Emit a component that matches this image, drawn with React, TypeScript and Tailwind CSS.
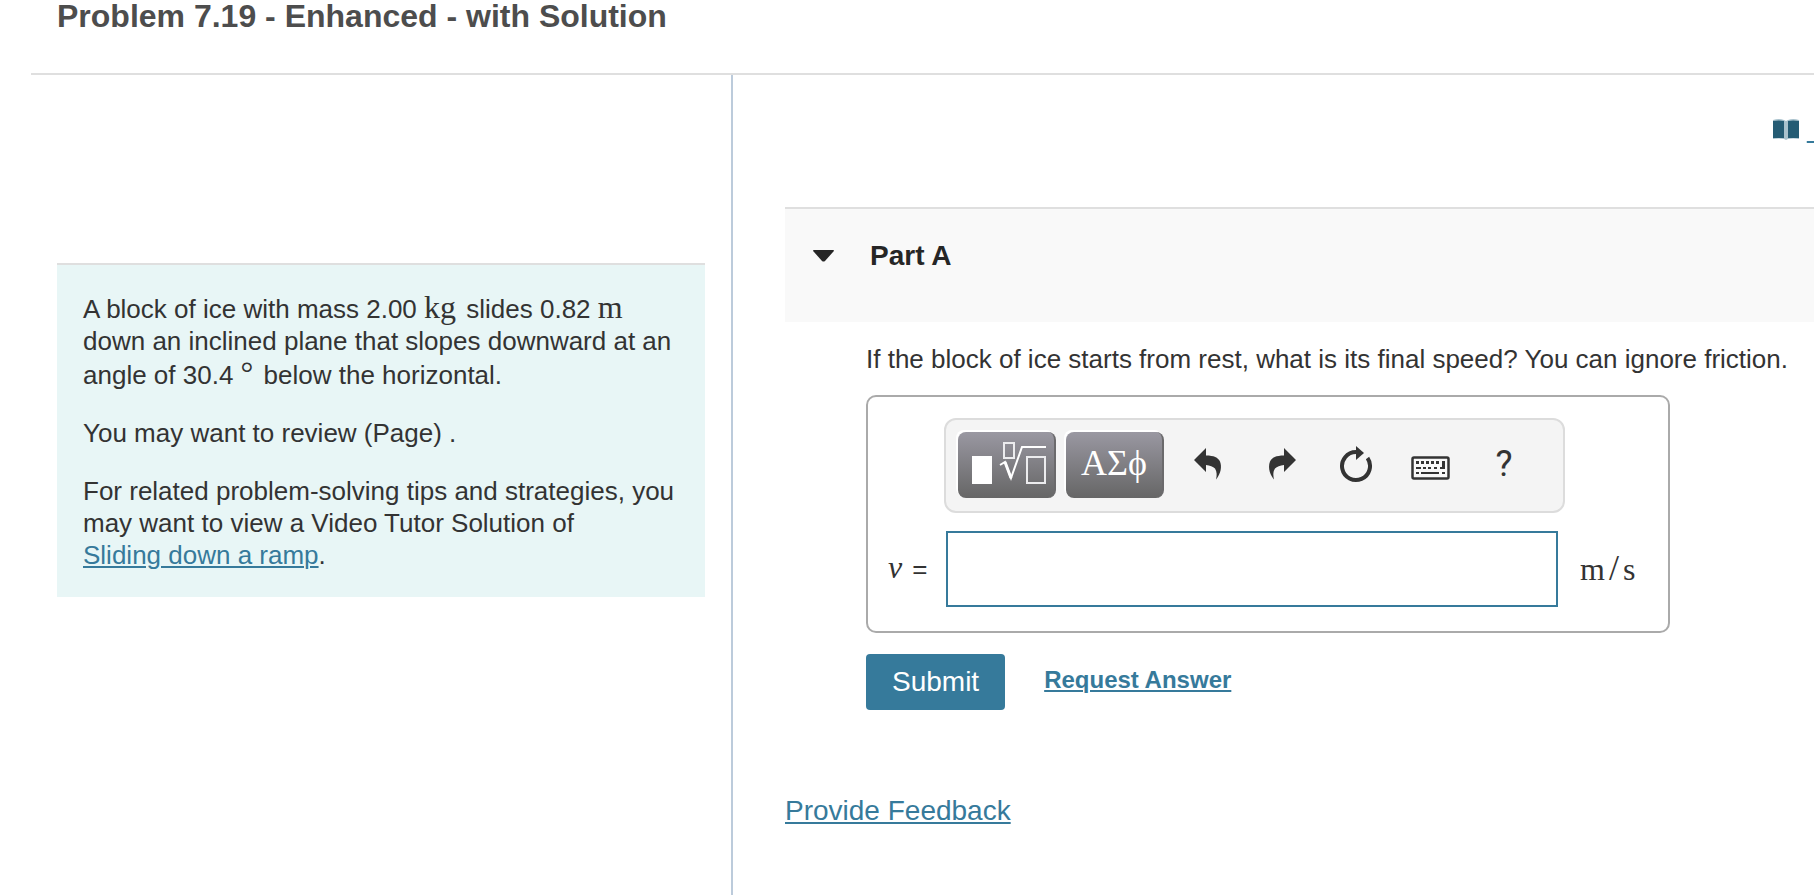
import { useState, type ReactNode } from "react"

const link = "text-[#367a9b] underline underline-offset-2 decoration-2"

function Unit({ children }: { children: ReactNode }) {
  return <span className="mr-[3px] font-['Liberation_Serif',serif] text-[32px] leading-8">{children}</span>
}

function TemplatesIcon() {
  return (
    <svg width="96" height="66" viewBox="0 0 96 66" fill="none" stroke="#fff" strokeWidth="2">
      <rect x="14" y="24" width="20" height="28" fill="#fff" stroke="none" />
      <rect x="46" y="11" width="10" height="15" stroke="#ececee" />
      <path d="M42 33l5-3 6 16 11-31h24" />
      <path d="M47 30l6 16" strokeWidth="3" />
      <rect x="69" y="25" width="18" height="26" stroke="#ececee" />
    </svg>
  )
}

function UndoIcon() {
  return (
    <svg width="28" height="32" viewBox="0 0 28 32" fill="#333">
      <path d="M0 12L12 0v7.500c8 0 12 2 14 6 2 5 1 12-4 18 1-4 1-8-1-11-2-2-5-3-9-3.500V24z" />
    </svg>
  )
}

function ResetIcon() {
  return (
    <svg width="34" height="38" viewBox="0 0 34 38">
      <path d="M17 7a14 14 0 1 0 11.500 6" fill="none" stroke="#333" strokeWidth="4" />
      <path d="M17 1l8 7-8 7z" fill="#333" />
    </svg>
  )
}

function KeyboardIcon() {
  return (
    <svg width="39" height="24" viewBox="0 0 39 24" fill="#333">
      <rect x="1.500" y="1.500" width="36" height="21" rx="1.500" fill="#f8f8f8" stroke="#333" strokeWidth="2.500" />
      <path d="M5 5h3v3H5zM10 5h3v3h-3zM15 5h3v3h-3zM20 5h3v3h-3zM25 5h3v3h-3zM31 5h3v8h-5v-2h2z" />
      <path d="M5 11h5v2H5zM12 11h3v2h-3zM17 11h3v2h-3zM23 11h3v2h-3zM5 16h3v2H5zM10 16h18v2H10zM31 16h3v2h-3z" />
    </svg>
  )
}

function BookIcon() {
  return (
    <svg width="26" height="22" viewBox="0 0 26 22">
      <path d="M0 1q6-2 11 0l2 1 2-1q5-2 11 0v19q-6-1-11 0l-2 1-2-1q-5-1-11 0z" fill="#a9c2cd" />
      <path d="M0 2q6-1 11 0v17H0zM15 2q5-1 11 0v17H15z" fill="#255c74" />
    </svg>
  )
}

const tools = [
  { label: "Undo", icon: <UndoIcon /> },
  { label: "Redo", icon: <span className="block -scale-x-100"><UndoIcon /></span> },
  { label: "Reset", icon: <ResetIcon /> },
  { label: "Keyboard shortcuts", icon: <span className="block pt-2"><KeyboardIcon /></span> },
  { label: "Help", icon: <span className="font-[Roboto,sans-serif] text-4xl">?</span> },
]

const dark =
  "h-[66px] w-[98px] rounded-lg border-r-2 border-[#6b6a6c] bg-linear-to-b from-[#9a98a2] to-[#666] text-white shadow-[-2px_-2px_0_#fff]"

function Toolbar() {
  return (
    <div className="ml-[76px] flex w-fit items-center rounded-xl border-2 border-[#dcdcdc] bg-[#f4f4f4] pt-3 pr-[22px] pb-[13px] pl-3">
      <button aria-label="Templates" className={`${dark} mr-2.5`}>
        <TemplatesIcon />
      </button>
      <button
        aria-label="Symbols"
        className={`${dark} mr-[7px] pb-1 font-['Liberation_Serif',serif] text-4xl leading-none`}
      >
        ΑΣϕ
      </button>
      {tools.map((tool) => (
        <button
          key={tool.label}
          aria-label={tool.label}
          className="flex h-[66px] w-[74px] items-center justify-center pb-0.5 text-[#333]"
        >
          {tool.icon}
        </button>
      ))}
    </div>
  )
}

function Answer() {
  const [value, setValue] = useState("")

  return (
    <form onSubmit={(e) => e.preventDefault()}>
      <div className="mt-5 max-w-[804px] rounded-[10px] border-2 border-[#aaa] pt-[21px] pb-6">
        <Toolbar />
        <div className="mt-[18px] flex items-center">
          <label htmlFor="answer" className="flex w-[78px] shrink-0 items-baseline gap-2.5 pb-0.5 pl-5 leading-8">
            <i className="font-['Liberation_Serif',serif] text-[32px]">v</i>
            <span>=</span>
          </label>
          <input
            id="answer"
            value={value}
            onChange={(e) => setValue(e.target.value)}
            className="h-[76px] min-w-0 flex-1 border-2 border-[#367a9b] bg-white px-3 outline-none"
          />
          <span className="flex w-[110px] shrink-0 items-baseline gap-1 pb-0.5 pl-[22px] font-['Liberation_Serif',serif] text-[32px] leading-8">
            <span>m</span>
            <span className="text-4xl leading-8">/</span>
            <span>s</span>
          </span>
        </div>
      </div>
      <div className="mt-[21px] flex items-center gap-[39px]">
        <button type="submit" className="h-14 rounded bg-[#367a9b] px-[26px] text-[28px] leading-8 text-white">
          Submit
        </button>
        <a href="#answer" className={`${link} pb-1 text-2xl font-bold`}>
          Request Answer
        </a>
      </div>
    </form>
  )
}

export default function App() {
  const [open, setOpen] = useState(true)

  return (
    <div className="flex min-h-screen flex-col overflow-x-hidden bg-white pl-[31px] font-['Liberation_Sans',Arial,sans-serif] text-[26px] leading-8 text-[#333]">
      <header className="border-b-2 border-[#dfdfdf] pb-[41px] pl-[26px]">
        <h1 className="text-[32px] leading-8 font-bold text-[#4d4d4d]">Problem 7.19 - Enhanced - with Solution</h1>
      </header>

      <div className="grid flex-1 grid-cols-[702fr_1081fr]">
        <aside className="min-w-0 border-r-2 border-[#bccbdb] px-[26px] pt-[188px]">
          <div className="space-y-[26px] border-t-2 border-[#dfdfdf] bg-[#e8f6f6] py-[26px] pr-6 pl-[26px]">
            <p>
              A block of ice with mass 2.00 <Unit>kg</Unit> slides 0.82 <Unit>m</Unit> down an inclined plane that
              slopes downward at an angle of 30.4 <Unit>°</Unit>&nbsp;below the horizontal.
            </p>
            <p>You may want to review (Page) .</p>
            <p>
              For related problem-solving tips and strategies, you may want to view a Video Tutor Solution of{" "}
              <a href="#ramp" className={`${link} whitespace-nowrap`}>
                Sliding down a ramp
              </a>
              .
            </p>
          </div>
        </aside>

        <main className="min-w-0 pt-[39px] pl-[52px]">
          <div className="flex h-8 items-center justify-end gap-2">
            <BookIcon />
            <a href="#review" aria-label="Review" className={link}>
              &nbsp;
            </a>
          </div>

          <section className="mt-[61px]">
            <h2 className="border-t-2 border-[#dfdfdf] bg-[#f9f9f9] pt-[31px] pb-[50px] pl-7 text-[28px] leading-8 font-bold text-[#262626]">
              <button aria-expanded={open} onClick={() => setOpen(!open)} className="flex items-center gap-9">
                <svg width="21" height="12" viewBox="0 0 21 12" fill="#262626">
                  <path d="M1 0h19q2 0 0 2l-8 9q-1.500 1-3 0L1 2q-2-2 0-2z" />
                </svg>
                Part A
              </button>
            </h2>
            {open && (
              <div className="pt-[21px] pl-[81px]">
                <p>If the block of ice starts from rest, what is its final speed? You can ignore friction.</p>
                <Answer />
              </div>
            )}
          </section>

          <a href="#feedback" className={`${link} mt-[85px] inline-block text-[28px] leading-8`}>
            Provide Feedback
          </a>
        </main>
      </div>
    </div>
  )
}
